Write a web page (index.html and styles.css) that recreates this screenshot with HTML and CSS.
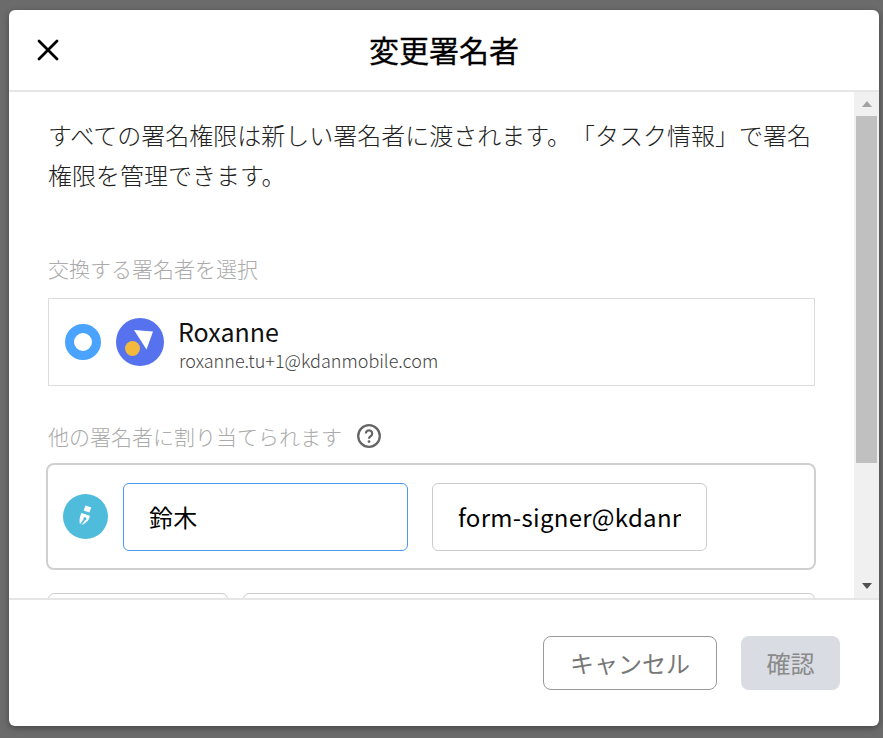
FILE: index.html
```html
<!DOCTYPE html>
<html lang="ja">
<head>
<meta charset="utf-8">
<title>変更署名者</title>
<link rel="stylesheet" href="styles.css">
</head>
<body>
<div class="dialog">
  <header class="head">
    <svg class="close" width="24" height="24" viewBox="0 0 24 24"><path d="M3 3 L21 21 M21 3 L3 21" stroke="#000" stroke-width="2.8" stroke-linecap="round" fill="none"/></svg>
    <h1 class="title">変更署名者</h1>
  </header>
  <div class="middle">
    <div class="content">
      <p class="intro">すべての署名権限は新しい署名者に渡されます。「タスク情報」で署名権限を管理できます。</p>
      <div class="label first">交換する署名者を選択</div>
      <div class="signer">
        <span class="radio"></span>
        <svg class="avatar" width="48" height="48" viewBox="0 0 48 48"><circle cx="24" cy="24" r="24" fill="#5672ee"/><path d="M18 12 L37 13.500 L30.500 31.500 Z" fill="#fff"/><circle cx="16.500" cy="30.500" r="7.500" fill="#f3b93c"/></svg>
        <div class="who">
          <div class="name">Roxanne</div>
          <div class="mail">roxanne.tu+1@kdanmobile.com</div>
        </div>
      </div>
      <div class="label second">他の署名者に割り当てられます
        <svg class="help" width="26" height="26" viewBox="0 0 26 26"><circle cx="13" cy="13" r="10.800" fill="none" stroke="#666" stroke-width="2.300"/><path d="M9.800 10.500a3.200 3.200 0 1 1 4.800 2.800c-1 .6-1.600 1.200-1.600 2.400" fill="none" stroke="#666" stroke-width="2.200"/><circle cx="13" cy="18.600" r="1.400" fill="#666"/></svg>
      </div>
      <div class="assign">
        <svg class="pen" width="45" height="45" viewBox="0 0 45 45"><circle cx="22.500" cy="22.500" r="22.500" fill="#4fbcdc"/><path fill-rule="evenodd" d="M22.500 11.500l5.800 1.900-1.900 5.100-5.800-1.900z M18.500 19l8.200 2.800c0 3.500-3 7-8.200 9.500l3.500-5a1.500 1.500 0 1 0-1.500-1l-3.500 5c-1-3.500-.2-8 1.500-11.300z" fill="#fff"/></svg>
        <input class="field active" value="鈴木">
        <input class="field mailbox" value="form-signer@kdanmobile.com">
      </div>
      <div class="next">
        <div class="stub short"></div>
        <div class="stub long"></div>
      </div>
    </div>
    <div class="scrollbar">
      <span class="arrow up"></span>
      <span class="thumb"></span>
      <span class="arrow down"></span>
    </div>
  </div>
  <footer class="foot">
    <button class="btn cancel">キャンセル</button>
    <button class="btn ok">確認</button>
  </footer>
</div>
</body>
</html>
```
FILE: styles.css
```css
* { box-sizing: border-box; }
html, body { margin: 0; height: 100%; }
body {
  background: #6b6b6b;
  padding: 10px 4px 12px 9px;
  font-family: "Noto Sans CJK JP", "Noto Sans", sans-serif;
  overflow: hidden;
}
.dialog {
  width: 870px;
  height: 716px;
  background: #fff;
  border-radius: 6px;
  box-shadow: 0 2px 6px rgba(0,0,0,.35);
  display: flex;
  flex-direction: column;
  overflow: hidden;
}
.head {
  height: 82px;
  flex: none;
  border-bottom: 2px solid #e6e6e6;
  position: relative;
  display: flex;
  align-items: center;
  justify-content: center;
}
.close { position: absolute; left: 27px; top: 28px; }
.title { margin: 0 0 2px; font-size: 30px; font-weight: 400; color: #000; line-height: 40px; -webkit-text-stroke: .3px #000; }
.middle { flex: 1; min-height: 0; display: flex; }
.content { flex: 1; min-width: 0; overflow: hidden; padding: 23px 39px 0 39px; }
.intro { margin: 0; font-size: 24px; font-weight: 300; line-height: 39.500px; color: #222; text-spacing-trim: space-all; }
.label { font-size: 21px; font-weight: 300; line-height: 30px; color: #aaa; display: flex; align-items: center; }
.label.first { margin-top: 59px; }
.label.second { margin-top: 35px; }
.help { margin-left: 14px; }
.signer {
  margin-top: 15px;
  height: 88px;
  border: 1px solid #ddd;
  display: flex;
  align-items: center;
  padding-left: 16px;
}
.radio { width: 36px; height: 36px; border-radius: 50%; border: 9px solid #4aa3ff; background: #fff; flex: none; }
.avatar { margin-left: 15px; flex: none; }
.who { margin-left: 15px; padding-top: 3px; }
.name { font-size: 25px; line-height: 32px; font-weight: 400; color: #111; margin-left: -1px; }
.mail { font-size: 18px; line-height: 26px; font-weight: 300; color: #444; }
.assign {
  margin: 12px -1px 0 -2px;
  height: 107px;
  border: 2px solid #d0d0d0;
  border-radius: 8px;
  display: flex;
  align-items: center;
  padding-left: 15px;
}
.pen { flex: none; margin-right: 15px; }
.field {
  height: 68px;
  border: 1px solid #ccc;
  border-radius: 6px;
  font: 400 24px "Noto Sans CJK JP", "Noto Sans", sans-serif;
  letter-spacing: .3px;
  color: #000;
  padding: 0 25px;
  outline: none;
  background: #fff;
}
.field.active { width: 285px; border-color: #4a9bf0; }
.field.mailbox { width: 275px; margin-left: 24px; }
.next { display: flex; gap: 15px; margin: 23px 0 0 0; }
.stub { height: 40px; border: 1px solid #ccc; border-radius: 6px; }
.short { width: 180px; }
.long { flex: 1; }
.scrollbar { width: 25px; flex: none; background: #f0f0f0; display: flex; flex-direction: column; align-items: center; }
.arrow { width: 0; height: 0; border-left: 5px solid transparent; border-right: 5px solid transparent; flex: none; }
.arrow.up { border-bottom: 6px solid #a3a3a3; margin-top: 9px; }
.arrow.down { border-top: 6px solid #505050; margin-top: auto; margin-bottom: 9px; }
.thumb { width: 21px; height: 347px; background: #c0c0c0; margin-top: 9px; }
.foot {
  border-top: 2px solid #e6e6e6;
  flex: none;
  height: 128px;
  display: flex;
  justify-content: flex-end;
  align-items: flex-start;
  padding: 36px 39px 0 0;
  gap: 24px;
}
.btn { height: 54px; border-radius: 8px; font: 400 24px "Noto Sans CJK JP", "Noto Sans", sans-serif; color: #777; padding: 0 0 2px; }
.cancel { width: 174px; background: #fff; border: 1px solid #999; }
.ok { width: 99px; background: #d9dce3; border: none; color: #8a8a8a; }
```
